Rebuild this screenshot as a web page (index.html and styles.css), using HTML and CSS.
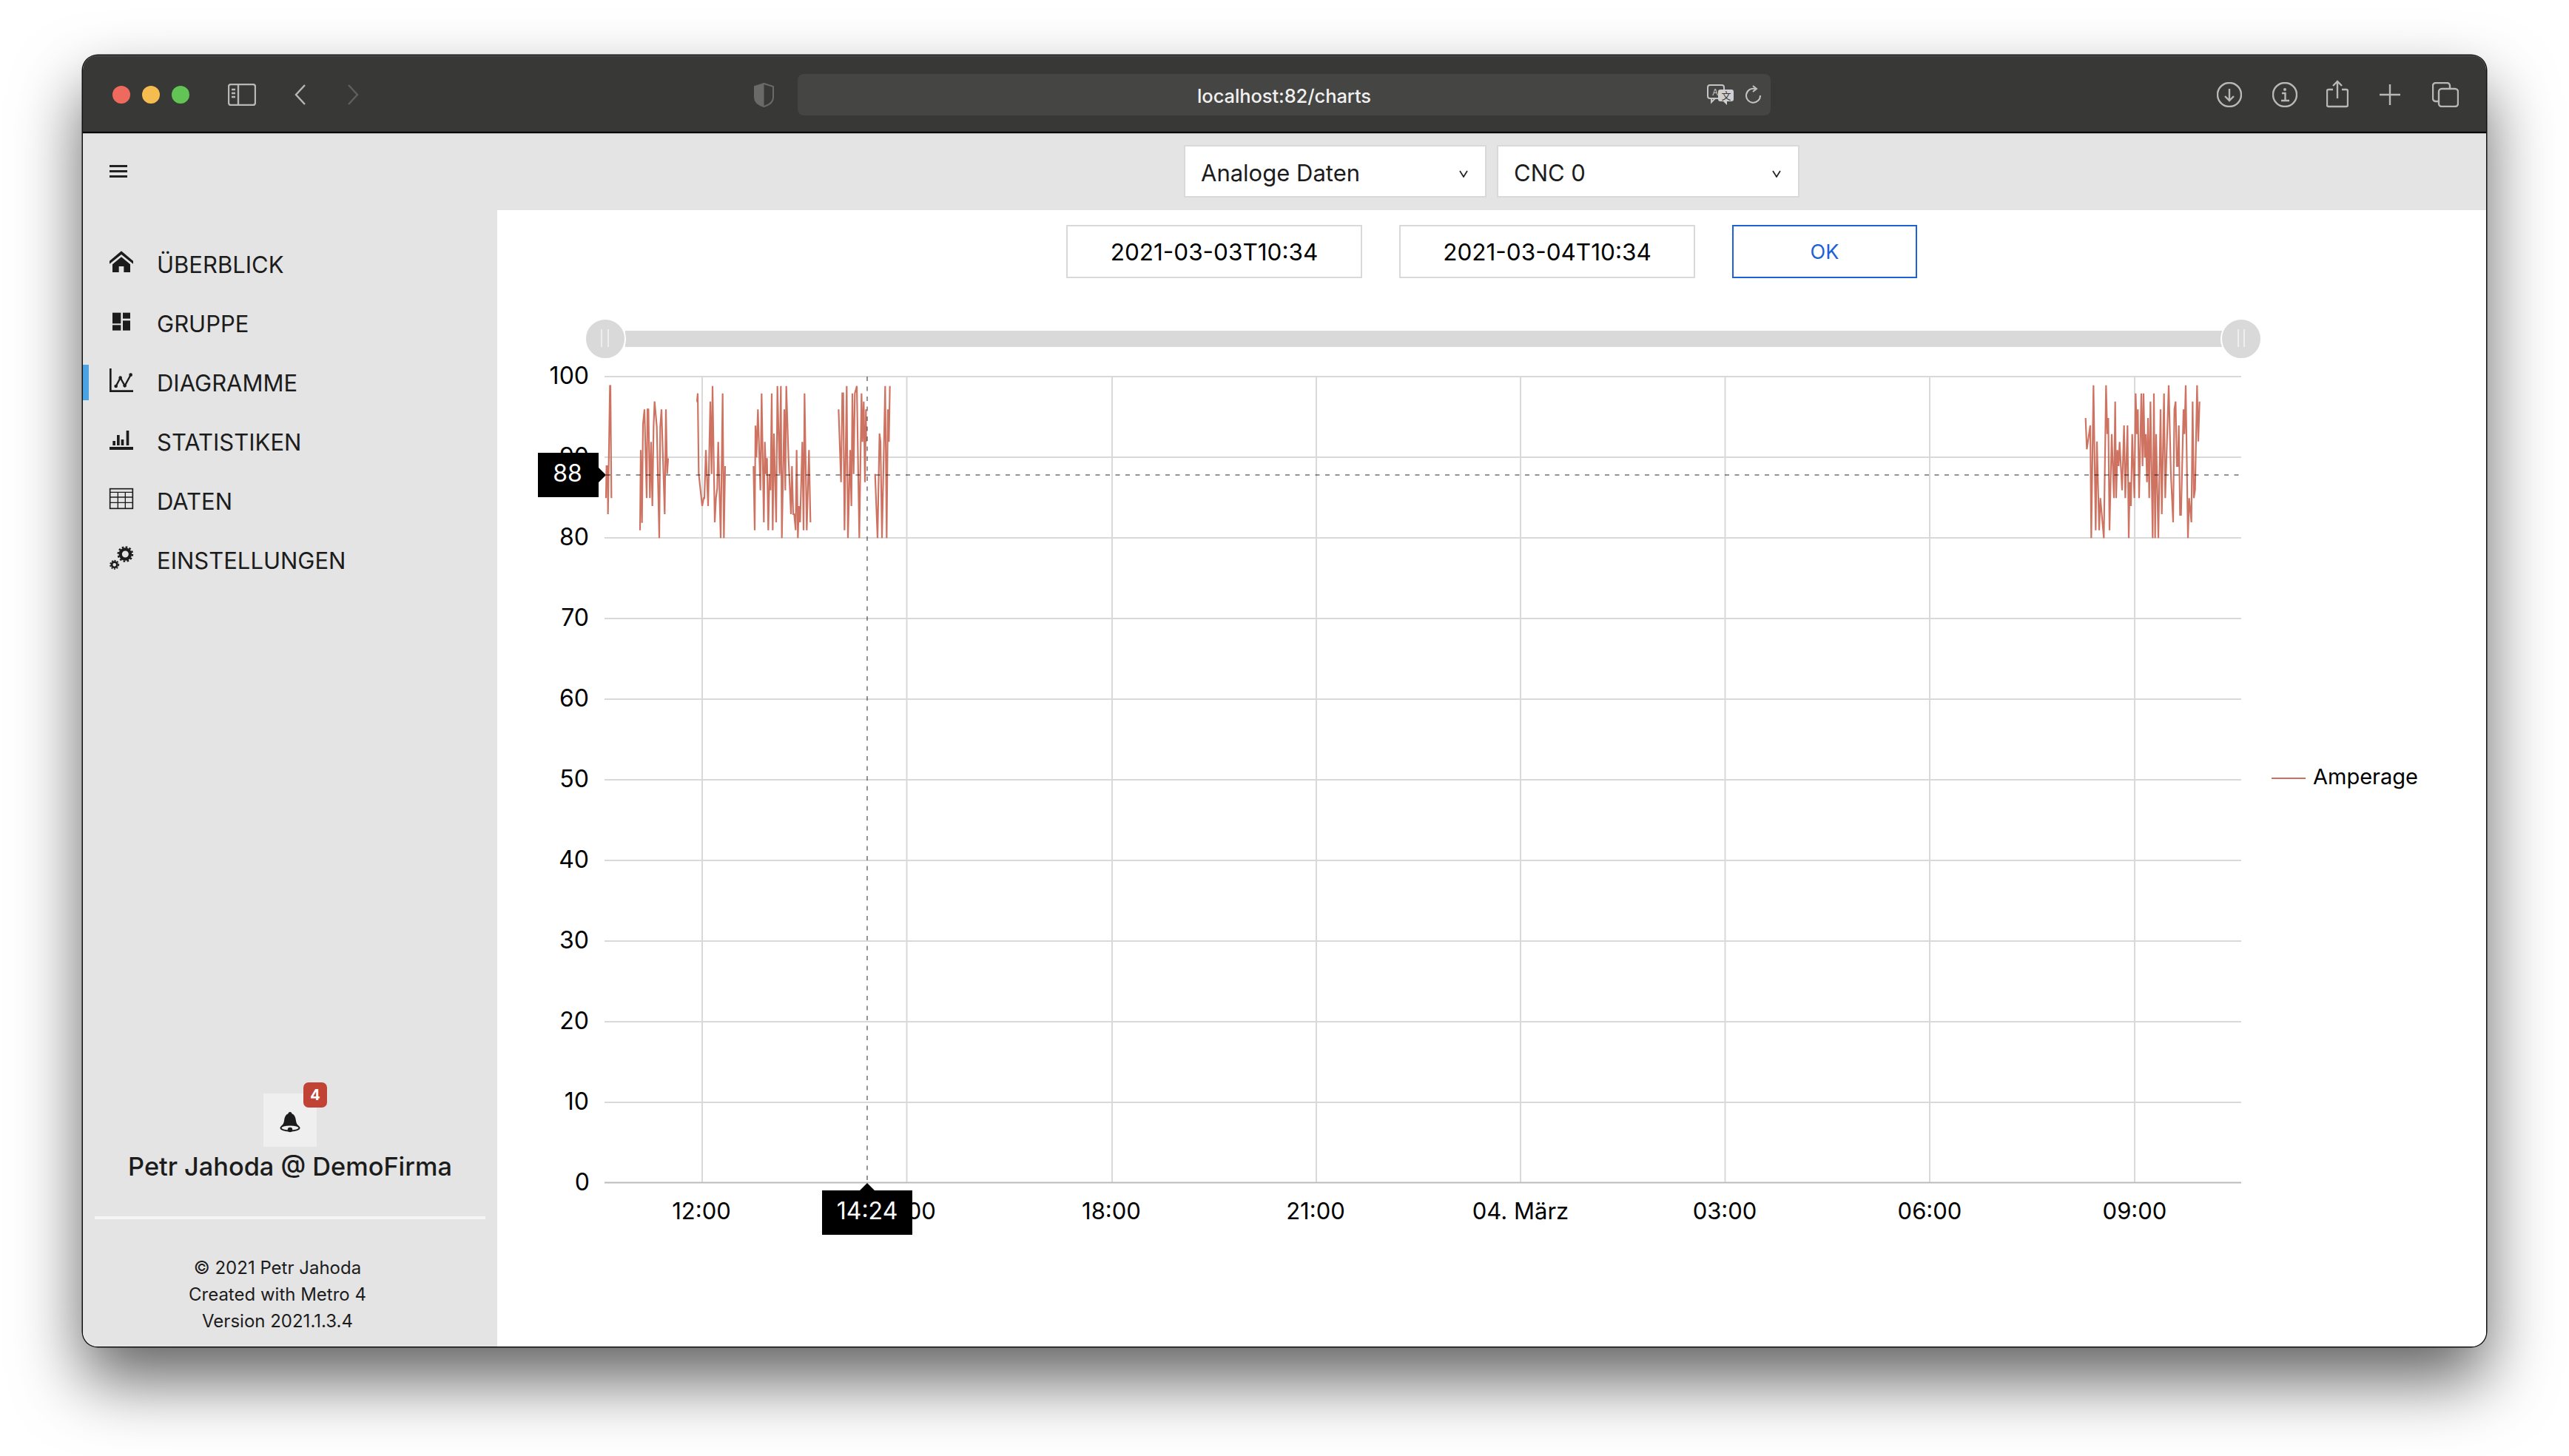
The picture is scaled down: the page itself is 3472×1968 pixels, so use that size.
FILE: index.html
```html
<!DOCTYPE html>
<html lang="de">
<head>
<meta charset="utf-8">
<title>localhost:82/charts</title>
<link rel="stylesheet" href="styles.css">
</head>
<body>
<div class="desk">
<div class="window">
  <header class="titlebar">
    <span class="light red"></span><span class="light yellow"></span><span class="light green"></span>
    <svg class="tb-sidebar" viewBox="0 0 38 30" width="38" height="30"><rect x="1" y="1" width="36" height="28" rx="3" class="tb-stroke"/><path d="M14 1v28" class="tb-stroke"/><path d="M5 8h5M5 13h5M5 18h5" class="tb-stroke"/></svg>
    <svg class="tb-back" viewBox="0 0 16 28" width="16" height="28"><path d="M14 1 2 14l12 13" class="tb-stroke"/></svg>
    <svg class="tb-fwd" viewBox="0 0 16 28" width="16" height="28"><path d="M2 1l12 13L2 27" class="tb-stroke dim"/></svg>
    <svg class="tb-shield" viewBox="0 0 27 33" width="27" height="33"><path d="M13.500 1 26 5v15c0 6-6 10-12.500 12C7 30 1 26 1 20V5z" fill="none" stroke="#6a6a68" stroke-width="2"/><path d="M13.500 1 1 5v15c0 6 6 10 12.500 12z" fill="#6a6a68"/></svg>
    <div class="urlbar">
      <span class="url-text">localhost:82/charts</span>
      <svg class="url-translate" viewBox="0 0 37 28" width="37" height="28"><rect x="1" y="1" width="22" height="18" rx="3" fill="none" stroke="#c4c4c4" stroke-width="2"/><path d="M6 19v5l5-5" fill="none" stroke="#c4c4c4" stroke-width="2"/><text x="7" y="15" class="tr-a">A</text><rect x="15" y="7" width="21" height="16" rx="3" fill="#d0d0d0"/><path d="M27 23v5l-5-5z" fill="#d0d0d0"/><text x="19.500" y="20" class="tr-b">文</text></svg>
      <svg class="url-reload" viewBox="0 0 22 26" width="22" height="26"><path d="M13 5A9.500 9.500 0 1 0 20 14" fill="none" stroke="#c4c4c4" stroke-width="2"/><path d="M10 1l5 4-5 4" fill="none" stroke="#c4c4c4" stroke-width="2"/></svg>
    </div>
    <svg class="tb-r tb-download" viewBox="0 0 34 34" width="34" height="34"><circle cx="17" cy="17" r="16" class="tb-stroke"/><path d="M17 9v16M11 19l6 6 6-6" class="tb-stroke"/></svg>
    <svg class="tb-r tb-info" viewBox="0 0 34 34" width="34" height="34"><circle cx="17" cy="17" r="16" class="tb-stroke"/><circle cx="17" cy="10" r="2" fill="#b8b8b8"/><path d="M13 15h4.500v10M12 25h11" class="tb-stroke"/></svg>
    <svg class="tb-r tb-share" viewBox="0 0 30 38" width="30" height="38"><path d="M9 13H3a2 2 0 0 0-2 2v19a2 2 0 0 0 2 2h24a2 2 0 0 0 2-2V15a2 2 0 0 0-2-2h-6M15 25V2M9 8l6-6 6 6" class="tb-stroke"/></svg>
    <svg class="tb-r tb-plus" viewBox="0 0 28 28" width="28" height="28"><path d="M14 0v28M0 14h28" class="tb-stroke"/></svg>
    <svg class="tb-r tb-tabs" viewBox="0 0 36 34" width="36" height="34"><path d="M8 26H5a4 4 0 0 1-4-4V5a4 4 0 0 1 4-4h15a4 4 0 0 1 4 4v3" class="tb-stroke"/><rect x="9" y="9" width="26" height="24" rx="4" class="tb-stroke"/></svg>
  </header>

  <div class="topbar">
    <div class="topbar-left">
      <span class="burger"><i></i><i></i><i></i></span>
    </div>
    <div class="topbar-selects">
      <div class="select"><span>Analoge Daten</span><svg class="caret" viewBox="0 0 12 10" width="12" height="10"><path d="M1 1l5 8 5-8" fill="none" stroke="#222" stroke-width="1.700"/></svg></div>
      <div class="select"><span>CNC 0</span><svg class="caret" viewBox="0 0 12 10" width="12" height="10"><path d="M1 1l5 8 5-8" fill="none" stroke="#222" stroke-width="1.700"/></svg></div>
    </div>
  </div>

  <div class="body">
    <aside class="sidebar">
      <nav class="menu">
        <a class="menu-item">
          <svg class="menu-icon" viewBox="114 63 96 96"><path d="M114 98 162 58l48 40v12L162 72l-48 38z"/><path d="M126 112 162 82l36 30v32h-26v-24h-20v24h-26z"/></svg>
          <span>ÜBERBLICK</span>
        </a>
        <a class="menu-item">
          <svg class="menu-icon" viewBox="114 303 96 96"><rect x="126" y="308" width="34" height="44"/><rect x="168" y="308" width="30" height="24"/><rect x="126" y="358" width="34" height="22"/><rect x="168" y="340" width="30" height="40"/></svg>
          <span>GRUPPE</span>
        </a>
        <a class="menu-item active">
          <svg class="menu-icon" viewBox="114 543 96 96"><path d="M114 534h8v88h88v8h-96z"/><path d="M140 606l18-34 18 32 24-44" fill="none" stroke="#1c1c1c" stroke-width="7"/><circle cx="140" cy="606" r="7"/><circle cx="158" cy="572" r="7"/><circle cx="176" cy="604" r="7"/><circle cx="200" cy="560" r="7"/></svg>
          <span>DIAGRAMME</span>
        </a>
        <a class="menu-item">
          <svg class="menu-icon" viewBox="114 783 96 96"><rect x="114" y="852" width="96" height="12"/><rect x="127" y="828" width="11" height="18"/><rect x="144" y="804" width="11" height="42"/><rect x="161" y="822" width="11" height="24"/><rect x="182" y="786" width="11" height="60"/></svg>
          <span>STATISTIKEN</span>
        </a>
        <a class="menu-item">
          <svg class="menu-icon" viewBox="114 1023 96 96"><rect x="116" y="1022" width="92" height="80" fill="none" stroke="#1c1c1c" stroke-width="5"/><path d="M116 1036h92M116 1056h92M116 1078h92M148 1036v66M178 1036v66" fill="none" stroke="#1c1c1c" stroke-width="4"/></svg>
          <span>DATEN</span>
        </a>
        <a class="menu-item">
          <svg class="menu-icon" viewBox="114 1263 96 96"><circle cx="178" cy="1287" r="20" fill="none" stroke="#1c1c1c" stroke-width="13"/><circle cx="178" cy="1287" r="29" fill="none" stroke="#1c1c1c" stroke-width="7" stroke-dasharray="8 7.200"/><circle cx="134" cy="1330" r="11" fill="none" stroke="#1c1c1c" stroke-width="8"/><circle cx="134" cy="1330" r="17" fill="none" stroke="#1c1c1c" stroke-width="5" stroke-dasharray="6 5.100"/></svg>
          <span>EINSTELLUNGEN</span>
        </a>
      </nav>
      <div class="side-bottom">
        <div class="bell">
          <svg viewBox="0 0 28 28" width="28" height="28"><path d="M14 0c1.500 0 2.500 1 2.500 2.300C20.500 3.800 21.500 8 22 12c.4 3 1.500 5 4 7-5-1.500-19-1.500-24 0 2.500-2 3.600-4 4-7 .5-4 1.500-8.200 5.500-9.700C11.500 1 12.500 0 14 0z" fill="#1c1c1c"/><ellipse cx="14" cy="21.500" rx="12.500" ry="4" fill="none" stroke="#1c1c1c" stroke-width="2"/><circle cx="14" cy="24" r="3.300" fill="#1c1c1c"/></svg>
          <span class="badge">4</span>
        </div>
        <div class="user">Petr Jahoda @ DemoFirma</div>
        <hr class="side-rule">
        <div class="copy">
          <div>© 2021 Petr Jahoda</div>
          <div>Created with Metro 4</div>
          <div>Version 2021.1.3.4</div>
        </div>
      </div>
    </aside>

    <main class="main">
      <div class="date-row">
        <div class="field">2021-03-03T10:34</div>
        <div class="field">2021-03-04T10:34</div>
        <div class="field ok">OK</div>
      </div>
      <svg class="chart" viewBox="672 376 2688 1444" width="2688" height="1444">
        <!-- range slider -->
        <rect x="845" y="447" width="2160" height="22" fill="#d9d9d9"/>
        <circle cx="818" cy="458" r="27" fill="#d9d9d9" stroke="#fff" stroke-width="2"/>
        <path d="M813 445v24M822 445v24" stroke="#eee" stroke-width="2"/>
        <circle cx="3029" cy="458" r="27" fill="#d9d9d9" stroke="#fff" stroke-width="2"/>
        <path d="M3025 445v24M3033 445v24" stroke="#eee" stroke-width="2"/>
        <!-- grid -->
        <g class="grid">
          <path d="M817 509H3029M817 618H3029M817 727H3029M817 836H3029M817 945H3029M817 1054H3029M817 1163H3029M817 1272H3029M817 1381H3029M817 1490H3029"/>
          <path d="M949 509V1598M1225.500 509V1598M1503 509V1598M1779 509V1598M2055 509V1598M2331.500 509V1598M2608 509V1598M2885 509V1598"/>
        </g>
        <path d="M817 1598.500H3029" stroke="#bbb" stroke-width="2" fill="none"/>
        <!-- axis labels -->
        <g class="ylabels">
          <text x="796" y="518.500">100</text><text x="796" y="627.500">90</text><text x="796" y="736.500">80</text><text x="796" y="845.500">70</text><text x="796" y="954.500">60</text><text x="796" y="1063.500">50</text><text x="796" y="1172.500">40</text><text x="796" y="1281.500">30</text><text x="796" y="1390.500">20</text><text x="796" y="1499.500">10</text><text x="797" y="1608.500">0</text>
        </g>
        <g class="xlabels">
          <text x="948" y="1648">12:00</text><text x="1225" y="1648">15:00</text><text x="1502" y="1648">18:00</text><text x="1778" y="1648">21:00</text><text x="2055" y="1648">04. März</text><text x="2331" y="1648">03:00</text><text x="2608" y="1648">06:00</text><text x="2885" y="1648">09:00</text>
        </g>
        <!-- series -->
        <g class="series" transform="translate(815 510) scale(.33333)">
          <polyline points="12,490 14,360 19,360 20,555 28,35 30,35 34,490"/>
          <polyline points="150,620 153,295 158,590 162,190 168,130 177,490 180,130 184,130 190,490 195,262 200,522 205,200 209,98 218,200 228,652 232,200 237,130 250,555 255,130 260,392 264,328"/>
          <polyline points="379,98 381,98 384,65 388,390 402,522 408,490 411,490 417,295 426,522 435,98 440,392 444,35 453,588 458,490 463,450 467,262 477,652 485,65 490,652 495,360"/>
        </g>
        <g class="series" transform="translate(1010 510) scale(.33333)">
          <polyline points="25,360 30,620 33,196 37,325 43,130 53,458 58,65 67,588 71,262 76,392 80,328 85,620 90,392 94,458 99,65 103,620 108,228 117,588 122,35 131,392 136,35 140,652 150,130 154,458 158,35 167,328 177,555 181,360 186,555 190,555 196,620 200,295 205,652 209,522 214,588 223,262 228,620 232,65 241,620 250,295 256,588"/>
          <polyline points="370,130 380,425 385,65 389,65 394,620 403,35 408,652 417,295 422,522 426,65 431,392 436,65 444,35 454,652 463,65 467,262 472,98 477,425 481,130 482,262"/>
          <polyline points="518,392 528,652 536,228 540,262 546,652 559,35 565,652 570,130 574,262 578,35"/>
        </g>
        <g class="series" transform="translate(2780 480) scale(.33333)">
          <polyline points="116,255 121,382 135,285 139,742 148,122 157,710 162,350 171,710 176,580 190,742 199,122 204,320 208,255 213,710 222,320 231,580 236,188 240,580 245,385 250,450 254,352 264,548 272,285 277,580 286,285 291,742 295,515 300,612 305,320 314,580 319,155 324,320 328,220 333,580 342,155 347,450 351,155 356,415 360,320 365,515 369,255 374,580 379,188 388,742 393,155 398,742 402,320 411,742 420,220 425,645 434,155 439,580 453,122 462,485 471,678 476,220 481,188 486,450 490,450 494,285 499,648 503,648 513,220 517,320 522,122 531,742 536,580 545,678 550,188 555,580 560,545 568,122 573,350 578,188"/>
        </g>
        <!-- crosshair -->
        <path class="cross" d="M819 642H3030"/>
        <path class="cross" d="M1172 509V1598"/>
        <!-- tooltips -->
        <path d="M727 612h82v20l10 10-10 10v20h-82z" fill="#000"/>
        <text x="767" y="651" class="tip">88</text>
        <path d="M1111 1609h51l10-10 10 10h51v60h-122z" fill="#000"/>
        <text x="1172" y="1648" class="tip">14:24</text>
        <!-- legend -->
        <path d="M3070 1052h46" stroke="#cc6f5c" stroke-width="2"/>
        <text x="3126" y="1060" class="legend">Amperage</text>
      </svg>
    </main>
  </div>
</div>
</div>
</body>
</html>
```
FILE: styles.css
```css
* { box-sizing: border-box; }
html, body { margin: 0; padding: 0; background: #fff; overflow: hidden; }
body { width: 3472px; height: 1968px; font-family: Inter, "Noto Sans", sans-serif; color: #1c1c1c; }
.desk { padding: 75px 112px 0; }
.window {
  width: 3248px; height: 1745px; border-radius: 20px; overflow: hidden; background: #fff;
  display: flex; flex-direction: column;
  box-shadow: 0 0 0 1.5px #111, 0 45px 90px rgba(0,0,0,.62);
}

/* browser chrome */
.titlebar {
  height: 105px; flex: none; background: #383836; display: flex; align-items: center;
  padding: 2px 0 0 40px; border-bottom: 2px solid #000; box-shadow: 0 1px 0 #b8b8b8; position: relative; z-index: 1;
  border-top: 1px solid #555;
}
.light { width: 24px; height: 24px; border-radius: 50%; margin-right: 16px; flex: none; }
.red { background: #ee6a5f; }
.yellow { background: #f5bd4f; }
.green { background: #61c454; margin-right: 0; }
.tb-stroke { fill: none; stroke: #b8b8b8; stroke-width: 2.4; }
.tb-stroke.dim { stroke: #5f5f5d; }
.tb-sidebar { margin-left: 52px; flex: none; }
.tb-back { margin-left: 52px; flex: none; }
.tb-fwd { margin-left: 55px; flex: none; }
.tb-shield { margin-left: 534px; flex: none; }
.urlbar {
  margin-left: 32px; width: 1315px; height: 56px; border-radius: 8px; background: #454543;
  display: flex; align-items: center; flex: none; position: relative;
}
.url-text { position: absolute; left: 0; right: 0; top: 15px; text-align: center; color: #f0f0f0; font-size: 25.500px; line-height: 30px; font-weight: 500; letter-spacing: -.1px; }
.url-translate { margin-left: 1229px; flex: none; }
.url-reload { margin-left: 15px; flex: none; }
.tr-a { font-size: 12px; fill: #c4c4c4; font-family: Inter, sans-serif; }
.tr-b { font-size: 13px; fill: #383836; font-family: "Noto Sans CJK SC", sans-serif; }
.tb-download { margin-left: 603px; flex: none; }
.tb-info { margin-left: 41px; flex: none; }
.tb-share { margin-left: 39px; flex: none; margin-top: -3px; }
.tb-plus { margin-left: 42px; flex: none; }
.tb-tabs { margin-left: 43px; flex: none; }

/* top strip */
.topbar { height: 104px; flex: none; background: #e4e4e4; display: flex; }
.topbar-left { width: 560px; padding: 43px 0 0 36px; flex: none; }
.burger { width: 24px; height: 17px; display: flex; flex-direction: column; justify-content: space-between; }
.burger i { display: block; height: 3px; background: #222; }
.topbar-selects { flex: 1; display: flex; justify-content: center; gap: 14px; padding-top: 16px; }
.select {
  width: 409px; height: 71px; background: #fff; border: 2px solid #d9d9d9; display: flex; align-items: center;
  justify-content: space-between; padding: 3px 23px 0 21px; font-size: 31px; color: #1c1c1c;
}
.caret { margin-top: 4px; }

/* sidebar */
.body { flex: 1; display: flex; min-height: 0; }
.sidebar { width: 560px; flex: none; background: #e4e4e4; display: flex; flex-direction: column; padding-top: 33px; }
.menu { display: flex; flex-direction: column; }
.menu-item {
  height: 80px; display: flex; align-items: center; padding-left: 36px; font-size: 31px; color: #1c1c1c; position: relative;
}
.menu-item.active::before { content: ""; position: absolute; left: 0; top: 16px; width: 8px; height: 48px; background: #4aa3e3; }
.menu-icon { width: 32px; height: 32px; margin-right: 32px; flex: none; overflow: visible; fill: #1c1c1c; }
.side-bottom { margin-top: auto; display: flex; flex-direction: column; align-items: center; padding-bottom: 16px; }
.bell { width: 72px; height: 72px; background: #efefef; position: relative; display: flex; align-items: center; justify-content: center; padding-top: 5px; }
.badge {
  position: absolute; left: 54px; top: -15px; width: 32px; height: 34px; background: #c04335; border-radius: 7px;
  color: #fff; font-size: 20px; font-weight: 700; display: flex; align-items: center; justify-content: center;
}
.user { font-size: 34.300px; font-weight: 500; line-height: 44px; margin-top: 5px; color: #1c1c1c; }
.side-rule { width: 528px; height: 4px; border: 0; margin: 45px 0 48px; background: #f5f5f5; }
.copy { font-size: 24px; line-height: 36px; text-align: center; padding-right: 34px; color: #1c1c1c; }

/* main */
.main { flex: 1; background: #fff; display: flex; flex-direction: column; padding-top: 20px; min-width: 0; }
.date-row { display: flex; justify-content: center; gap: 50px; height: 72px; flex: none; }
.field {
  width: 400px; height: 72px; border: 2px solid #d9d9d9; display: flex; align-items: center; justify-content: center;
  font-size: 31.500px; color: #000;
}
.field.ok { width: 250px; border-color: #1d62d4; color: #1d62d4; font-size: 27px; }
.chart { display: block; flex: none; }
.grid path { fill: none; stroke: #d9d9d9; stroke-width: 2; }
.ylabels text { font-family: Inter, sans-serif; font-size: 32px; fill: #000; text-anchor: end; }
.xlabels text { font-family: Inter, sans-serif; font-size: 31px; fill: #000; text-anchor: middle; }
.series polyline { fill: none; stroke: #cb6c58; stroke-width: 6.500; stroke-opacity: .95; stroke-linejoin: miter; }
.cross { fill: none; stroke: #000; stroke-opacity: .42; stroke-width: 2; stroke-dasharray: 6 7.500; }
.tip { font-family: Inter, sans-serif; font-size: 32px; fill: #fff; text-anchor: middle; }
.legend { font-family: Inter, sans-serif; font-size: 29px; fill: #000; }
```
